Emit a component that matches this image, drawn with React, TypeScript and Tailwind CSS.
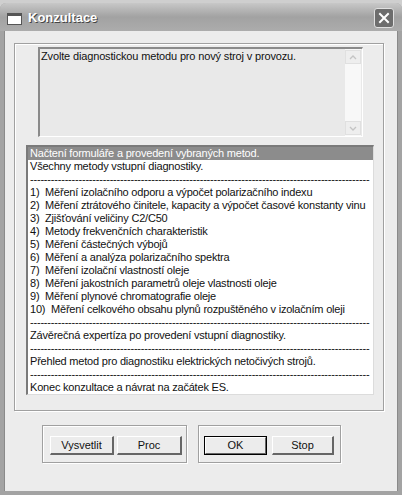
import React from 'react';

const rows: { text: string; selected?: boolean; dash?: boolean }[] = [
  { text: 'Načtení formuláře a provedení vybraných metod.', selected: true },
  { text: 'Všechny metody vstupní diagnostiky.' },
  { text: '', dash: true },
  { text: '1)  Měření izolačního odporu a výpočet polarizačního indexu' },
  { text: '2)  Měření ztrátového činitele, kapacity a výpočet časové konstanty vinu' },
  { text: '3)  Zjišťování veličiny C2/C50' },
  { text: '4)  Metody frekvenčních charakteristik' },
  { text: '5)  Měření částečných výbojů' },
  { text: '6)  Měření a analýza polarizačního spektra' },
  { text: '7)  Měření izolační vlastností oleje' },
  { text: '8)  Měření jakostních parametrů oleje vlastnosti oleje' },
  { text: '9)  Měření plynové chromatografie oleje' },
  { text: '10)  Měření celkového obsahu plynů rozpuštěného v izolačním oleji' },
  { text: '', dash: true },
  { text: 'Závěrečná expertíza po provedení vstupní diagnostiky.' },
  { text: '', dash: true },
  { text: 'Přehled metod pro diagnostiku elektrických netočivých strojů.' },
  { text: '', dash: true },
  { text: 'Konec konzultace a návrat na začátek ES.' },
];

const dashes = '-'.repeat(98);

function Btn({ label, width, isDefault }: { label: string; width: string; isDefault?: boolean }) {
  if (isDefault) {
    return (
      <div className={width + ' h-[19px] border border-black'}>
        <button className="w-full h-full flex items-center justify-center text-[11px] text-[#111] bg-[#ececec] border-t border-l border-white border-r border-b border-r-[#666] border-b-[#666]">
          {label}
        </button>
      </div>
    );
  }
  return (
    <button
      className={
        width +
        ' h-[19px] flex items-center justify-center text-[11px] text-[#111] bg-[#ececec] border-t border-l border-white border-r-2 border-b-2 border-r-[#666] border-b-[#666]'
      }
    >
      {label}
    </button>
  );
}

export default function App() {
  return (
    <div
      className="w-[402px] h-[495px] bg-[#cfcfcf] pt-[3px] overflow-hidden"
      style={{ fontFamily: '"Liberation Sans", Arial, sans-serif' }}
    >
      <div className="h-full flex flex-col rounded-t-[6px] overflow-hidden bg-[#a3a3a3]">
        {/* title bar */}
        <div className="h-[28px] shrink-0 flex items-center px-[4px] bg-gradient-to-b from-[#c8c8c8] via-[#a2a2a2] to-[#acacac]">
          <div className="w-[15px] h-[12px] ml-[3px] mt-[3px] bg-white border border-[#555] border-t-[3px]" />
          <span className="ml-[6px] mt-[2px] text-[13px] font-bold text-white [text-shadow:1px_1px_0_#444]">
            Konzultace
          </span>
          <div className="ml-auto mr-[4px] mt-[2px] w-[20px] h-[20px] rounded-[3px] bg-[#6d6d6d] border border-[#e0e0e0] flex items-center justify-center">
            <svg width="12" height="12" viewBox="0 0 12 12">
              <path d="M2 2 L10 10 M10 2 L2 10" stroke="#fff" strokeWidth="2" strokeLinecap="square" />
            </svg>
          </div>
        </div>

        {/* body */}
        <div className="flex-1 mx-[4px] mb-[4px] bg-[#ececec] border-l border-r border-[#8a8a8a] pt-[12px] pl-[9px]">
          <div className="w-[370px] h-[368px] border border-[#a0a0a0] shadow-[inset_1px_1px_0_#fff,1px_1px_0_#fff] pt-[3px]">
            {/* textarea */}
            <div className="ml-[23px] w-[325px] h-[90px] flex bg-[#e9e9e9] border-t-2 border-l-2 border-t-[#8a8a8a] border-l-[#8a8a8a] border-b border-r border-b-white border-r-white">
              <div className="flex-1 pl-[1px] pt-[1px] text-[11px] leading-[13px] tracking-[-0.15px] text-[#111] whitespace-nowrap">
                Zvolte diagnostickou metodu pro nový stroj v provozu.
              </div>
              <div className="w-[16px] flex flex-col justify-between bg-[#f8f8f8] py-[1px] mr-[1px]">
                <div className="h-[14px] border border-[#e0e0e0] bg-[#eeeeee] flex items-center justify-center">
                  <svg width="8" height="5" viewBox="0 0 8 5">
                    <path d="M1 4 L4 1 L7 4" stroke="#c4c4c4" strokeWidth="1.3" fill="none" />
                  </svg>
                </div>
                <div className="h-[14px] border border-[#e0e0e0] bg-[#eeeeee] flex items-center justify-center">
                  <svg width="8" height="5" viewBox="0 0 8 5">
                    <path d="M1 1 L4 4 L7 1" stroke="#c4c4c4" strokeWidth="1.3" fill="none" />
                  </svg>
                </div>
              </div>
            </div>

            {/* listbox */}
            <div className="ml-[11px] mt-[8px] w-[348px] h-[250px] overflow-hidden bg-white border-t-2 border-l-2 border-t-[#7a7a7a] border-l-[#7a7a7a] border-b border-r border-b-[#dcdcdc] border-r-[#dcdcdc]">
              {rows.map((r, i) => (
                <div
                  key={i}
                  className={
                    'h-[13px] leading-[13px] pl-[2px] text-[11px] tracking-[-0.2px] whitespace-pre overflow-hidden ' +
                    (r.selected ? 'bg-[#8c8c8c] text-white' : 'text-[#111]')
                  }
                >
                  {r.dash ? dashes : r.text}
                </div>
              ))}
            </div>
          </div>

          {/* buttons */}
          <div className="flex gap-[11px] ml-[28px] mt-[14px]">
            <div className="w-[145px] h-[38px] border border-[#a0a0a0] shadow-[inset_1px_1px_0_#fff,1px_1px_0_#fff] flex items-start gap-[3px] pl-[7px] pt-[10px]">
              <Btn label="Vysvetlit" width="w-[64px]" />
              <Btn label="Proc" width="w-[65px]" />
            </div>
            <div className="w-[143px] h-[38px] border border-[#a0a0a0] shadow-[inset_1px_1px_0_#fff,1px_1px_0_#fff] flex items-start gap-[5px] pl-[5px] pt-[10px]">
              <Btn label="OK" width="w-[63px]" isDefault />
              <Btn label="Stop" width="w-[62px]" />
            </div>
          </div>
        </div>
      </div>
    </div>
  );
}
